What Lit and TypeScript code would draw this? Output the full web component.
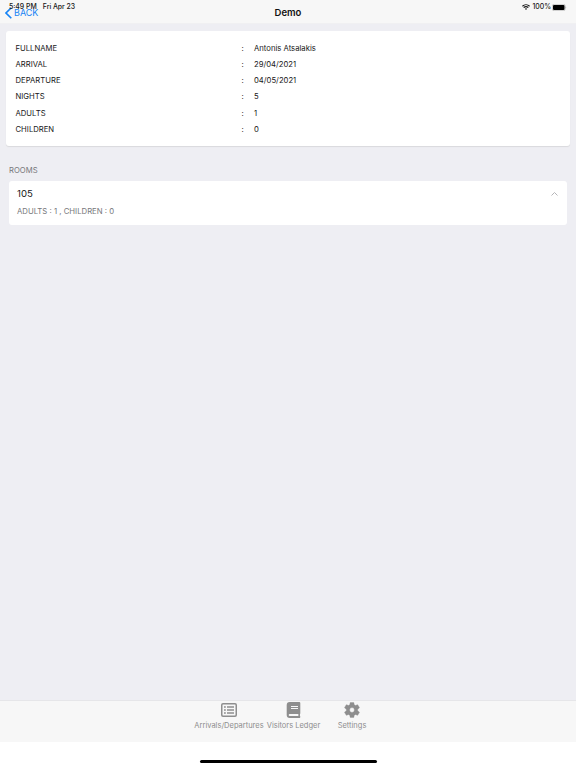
import { LitElement, html, css, svg } from "lit";
import { customElement } from "lit/decorators.js";

const DETAILS = [
  ["FULLNAME", "Antonis Atsalakis"],
  ["ARRIVAL", "29/04/2021"],
  ["DEPARTURE", "04/05/2021"],
  ["NIGHTS", "5"],
  ["ADULTS", "1"],
  ["CHILDREN", "0"],
];

const listIcon = svg`<path fill-rule="evenodd" d="M2 1h12a2 2 0 0 1 2 2v10a2 2 0 0 1-2 2H2a2 2 0 0 1-2-2V3a2 2 0 0 1 2-2Zm0 1.500a.5.5 0 0 0-.5.5v10c0 .3.2.5.5.5h12c.3 0 .5-.2.5-.5V3a.5.5 0 0 0-.5-.5Z"/>
  <path d="M3 4.200h1.800v1.600H3zM6 4.300h7v1.400H6zM3 7.200h1.800v1.600H3zM6 7.300h7v1.400H6zM3 10.200h1.800v1.600H3zM6 10.300h7v1.400H6z"/>`;
const bookIcon = svg`<path fill-rule="evenodd" d="M3.700 0h9.700c.5 0 .9.400.9.900v10.300c0 .3-.1.500-.3.700-.1.600-.1 1.700 0 2.200.2.200.3.400.3.600 0 .7-.3 1.300-.9 1.300H3.700a3 3 0 0 1-3-3V3a3 3 0 0 1 3-3Zm1.300 4v1h7V4Zm0 2.100v1h7v-1ZM3.700 12a1 1 0 0 0 0 2h8.700c-.1-.5-.1-1.400 0-2Z"/>`;
const gearIcon = svg`<path transform="translate(-1.120 -1.120) scale(.76)" fill-rule="evenodd" stroke="currentColor" stroke-width=".5" stroke-linejoin="round" d="M19.430 12.980c.04-.32.07-.64.07-.98s-.03-.66-.07-.98l2.110-1.650c.19-.15.24-.42.12-.64l-2-3.460c-.12-.22-.39-.3-.61-.22l-2.490 1c-.52-.4-1.080-.73-1.690-.98l-.38-2.650C14.460 2.180 14.250 2 14 2h-4c-.25 0-.46.18-.49.42l-.38 2.650c-.61.25-1.170.59-1.690.98l-2.490-1c-.23-.09-.49 0-.61.22l-2 3.460c-.13.22-.07.49.12.64l2.110 1.650c-.04.32-.07.65-.07.98s.03.66.07.98l-2.110 1.650c-.19.15-.24.42-.12.64l2 3.460c.12.22.39.3.61.22l2.490-1c.52.4 1.080.73 1.690.98l.38 2.650c.03.24.24.42.49.42h4c.25 0 .46-.18.49-.42l.38-2.650c.61-.25 1.170-.59 1.690-.98l2.490 1c.23.09.49 0 .61-.22l2-3.460c.12-.22.07-.49-.12-.64ZM12 15.200a3.200 3.200 0 1 1 0-6.400 3.200 3.200 0 0 1 0 6.400Z"/>`;

const TABS = [
  { label: "Arrivals/Departures", icon: listIcon, cls: "arrivals" },
  { label: "Visitors Ledger", icon: bookIcon, cls: "ledger" },
  { label: "Settings", icon: gearIcon, cls: "settings" },
];

@customElement("app-root")
export class AppRoot extends LitElement {
  static styles = css`
    :host {
      display: flex;
      flex-direction: column;
      position: relative;
      box-sizing: border-box;
      width: 100%;
      height: 100vh;
      overflow: hidden;
      background: #eeeef3;
      color: #171717;
      font-family: Inter, "Liberation Sans", sans-serif;
      font-size: 7.700px;
      white-space: nowrap;
    }
    svg { display: block; }
    .status {
      position: absolute;
      inset: 2px 9px auto 9px;
      height: 10px;
      display: flex;
      align-items: center;
      font-size: 6.900px;
      line-height: 10px;
      font-weight: 500;
    }
    .date { margin-left: 6px; }
    .wifi { margin-left: auto; width: 8px; height: 6px; }
    .percent { margin: 0 1px 0 2px; }
    .battery { width: 15px; height: 7px; }
    .nav {
      flex: none;
      height: 24px;
      box-sizing: border-box;
      border-bottom: 1px solid #f0f0f2;
      background: #f7f7f7;
      display: grid;
      grid-template-columns: 1fr auto 1fr;
      align-items: center;
    }
    .back {
      display: flex;
      align-items: center;
      gap: 2px;
      padding: 2px 0 0 5px;
      color: #1683f5;
      font-size: 9px;
    }
    .title { font-size: 9.500px; font-weight: 600; padding-top: 2px; color: #111; }
    .details {
      flex: none;
      margin: 7px 6px 0;
      height: 115px;
      box-sizing: border-box;
      padding: 8.900px 9.500px 0;
      border-radius: 3px;
      background: #fff;
      box-shadow: 0 1px 1px #d9d9dd;
    }
    .row {
      display: grid;
      grid-template-columns: 226px 12.500px 1fr;
      height: 16.300px;
      align-items: center;
    }
    .heading { margin: 19px 9px 0; line-height: 12px; color: #77777b; height: 16px; }
    .room {
      flex: none;
      margin: 0 9px;
      height: 44px;
      box-sizing: border-box;
      padding: 6px 8px;
      border-radius: 3px;
      background: #fff;
    }
    .room-top {
      display: flex;
      align-items: center;
      justify-content: space-between;
      height: 13px;
      font-size: 9.600px;
    }
    .guests { margin-top: 5px; line-height: 12px; color: #77777b; font-size: 7.750px; }
    .tabs {
      flex: none;
      margin-top: auto;
      height: 42px;
      box-sizing: border-box;
      border-top: 1px solid #e6e6e9;
      background: #f7f7f7;
      display: flex;
      padding-left: 193px;
      color: #8e8e8e;
    }
    .tab {
      display: flex;
      flex-direction: column;
      align-items: center;
      padding-top: 1px;
      line-height: 10px;
      font-size: 7.500px;
    }
    .tab svg { margin-bottom: 3px; fill: currentColor; }
    .arrivals { width: 72px; }
    .ledger { width: 57px; }
    .settings { width: 60px; }
    .home { flex: none; height: 26px; background: #fff; display: flex; justify-content: center; }
    .indicator { width: 177px; height: 3px; margin-top: 18px; border-radius: 2px; background: #000; }
  `;

  render() {
    return html`
      <header class="nav">
        <div class="back">
          <svg width="7" height="12" viewBox="0 0 7 12" fill="none" stroke="currentColor" stroke-width="1.600"><path d="M6.300.7 1 6l5.300 5.300"/></svg>
          <span>BACK</span>
        </div>
        <div class="title">Demo</div>
      </header>
      <div class="status">
        <span>5:49 PM</span><span class="date">Fri Apr 23</span>
        <svg class="wifi" viewBox="0 0 8 6" fill="none" stroke="#171717"><path d="M.4 2.200a5.200 5.200 0 0 1 7.200 0M1.700 3.600a3.400 3.400 0 0 1 4.600 0" stroke-width="1.200"/><path d="m2.900 4.700 1.100 1.200 1.100-1.200a1.600 1.600 0 0 0-2.200 0Z" fill="#171717" stroke="none"/></svg>
        <span class="percent">100%</span>
        <svg class="battery" viewBox="0 0 15 7"><rect x=".3" y=".3" width="12.900" height="6.400" rx="1.800" fill="none" stroke="#999" stroke-width=".5"/><rect x="1" y="1" width="11.500" height="5" rx="1.100"/><path d="M13.700 2.500q1 .9 0 2Z" fill="#777"/></svg>
      </div>
      <section class="details">
        ${DETAILS.map(([k, v]) => html`<div class="row"><span>${k}</span><span>:</span><span>${v}</span></div>`)}
      </section>
      <div class="heading">ROOMS</div>
      <section class="room">
        <div class="room-top">
          <span>105</span>
          <svg width="9" height="6" viewBox="0 0 9 6" fill="none" stroke="#b5b5b8"><path d="m1.500 4.500 3-3 3 3"/></svg>
        </div>
        <div class="guests">ADULTS : 1 , CHILDREN : 0</div>
      </section>
      <nav class="tabs">
        ${TABS.map((t) => html`<div class="tab ${t.cls}"><svg width="16" height="16" viewBox="0 0 16 16">${t.icon}</svg><span>${t.label}</span></div>`)}
      </nav>
      <footer class="home"><div class="indicator"></div></footer>
    `;
  }
}
